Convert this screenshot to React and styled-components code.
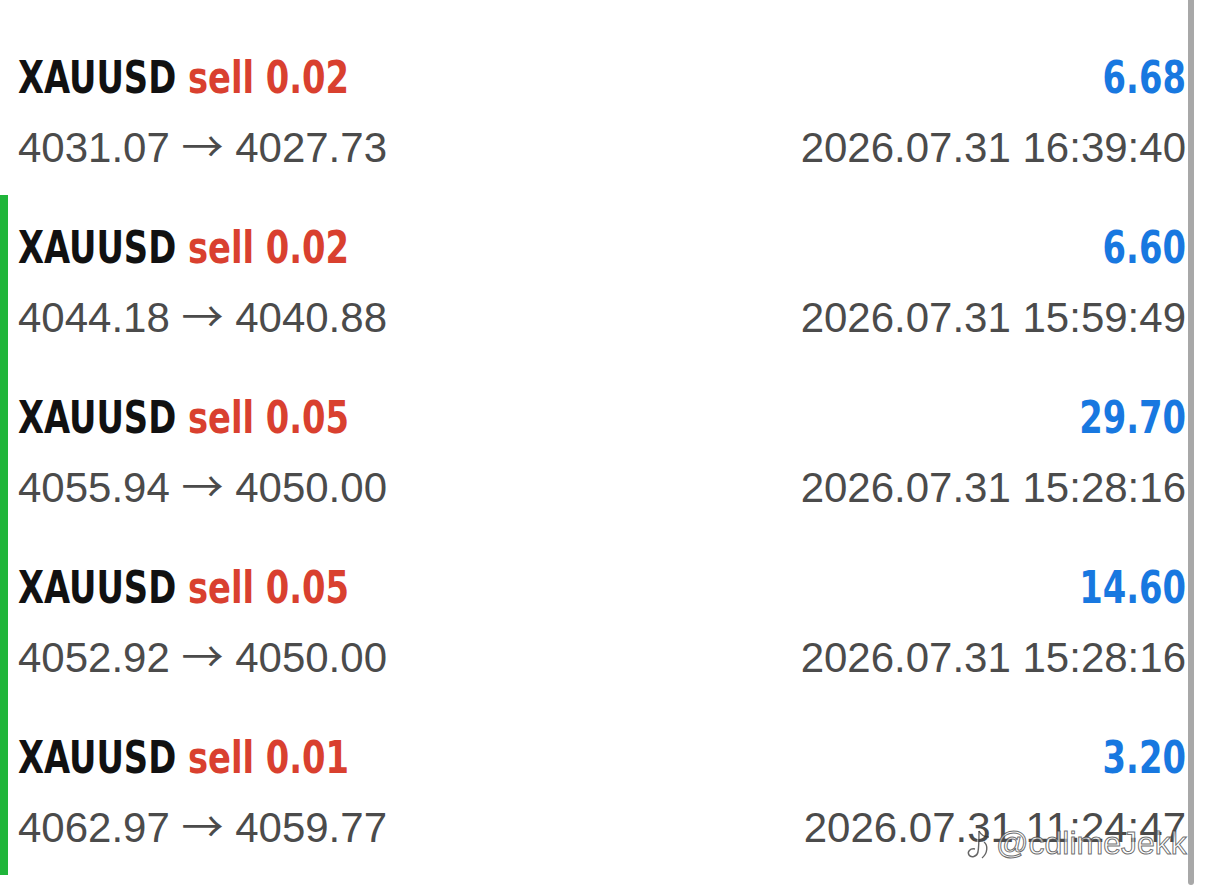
import React from "react";
import styled, { createGlobalStyle } from "styled-components";

const GlobalStyle = createGlobalStyle`
  html, body {
    margin: 0;
    padding: 0;
    background: #ffffff;
  }
  body {
    font-family: "Liberation Sans", Arial, sans-serif;
    overflow: hidden;
  }
`;

const Screen = styled.div`
  position: relative;
  width: 1206px;
  height: 894px;
  overflow: hidden;
  background: #ffffff;
`;

const List = styled.div`
  display: flex;
  flex-direction: column;
  padding-top: 25px;
`;

const Row = styled.div`
  display: flex;
  flex-direction: column;
  gap: 20px;
  height: 170px;
  box-sizing: border-box;
  padding: 28px 20px 22px 18px;
  box-shadow: ${(p) => (p.$marked ? "inset 8px 0 0 #20b53a" : "none")};
`;

const Line = styled.div`
  display: flex;
  justify-content: space-between;
  align-items: baseline;
  height: 50px;
  line-height: 50px;
  white-space: nowrap;
`;

/* tall, narrow bold face: condensed DejaVu squeezed a bit further */
const Condensed = styled.span`
  display: inline-block;
  font-family: "DejaVu Sans Condensed", "DejaVu Sans", sans-serif;
  font-stretch: condensed;
  font-weight: bold;
  font-size: 45px;
  transform: scaleX(0.834);
`;

const Title = styled(Condensed)`
  transform-origin: left center;
  color: #111111;
`;

const Side = styled.span`
  color: #d9402f;
  margin-left: 14px;
`;

const Profit = styled(Condensed)`
  transform-origin: right center;
  color: #1878e0;
`;

const Detail = styled.span`
  font-family: "Liberation Sans", Arial, sans-serif;
  font-size: 42px;
  color: #4b4b4b;
`;

const Arrow = styled.span`
  font-family: "Noto Sans CJK SC", "DejaVu Sans", sans-serif;
  font-size: 42px;
  line-height: 0;
`;

const ScrollThumb = styled.div`
  position: absolute;
  top: -10px;
  left: 1188px;
  width: 6px;
  height: 895px;
  border-radius: 3px;
  background: #a8a8a8;
`;

const Watermark = styled.div`
  position: absolute;
  left: 966px;
  top: 825px;
  display: flex;
  align-items: center;
  gap: 4px;
  font-family: "Liberation Sans", Arial, sans-serif;
  font-size: 32px;
  color: rgba(255, 255, 255, 0.6);
  -webkit-text-stroke: 1px rgba(60, 60, 60, 0.75);
  pointer-events: none;
`;

const trades = [
  { lot: "0.02", open: "4031.07", close: "4027.73", profit: "6.68", time: "2026.07.31 16:39:40", marked: false },
  { lot: "0.02", open: "4044.18", close: "4040.88", profit: "6.60", time: "2026.07.31 15:59:49", marked: true },
  { lot: "0.05", open: "4055.94", close: "4050.00", profit: "29.70", time: "2026.07.31 15:28:16", marked: true },
  { lot: "0.05", open: "4052.92", close: "4050.00", profit: "14.60", time: "2026.07.31 15:28:16", marked: true },
  { lot: "0.01", open: "4062.97", close: "4059.77", profit: "3.20", time: "2026.07.31 11:24:47", marked: true },
];

function NoteLogo() {
  const stroke = "rgba(50,50,50,0.75)";
  return (
    <svg width="26" height="32" viewBox="0 0 26 32" fill="none">
      <path
        d="M13 3 C13 10 13 18 12 24 C11 29 5 30 3 27 C1 24 4 20 9 21"
        stroke={stroke}
        strokeWidth="1.4"
        fill="rgba(255,255,255,0.5)"
      />
      <path d="M13 3 C15 7 19 9 23 9" stroke={stroke} strokeWidth="1.4" />
      <path d="M18 14 C22 17 22 25 16 30" stroke={stroke} strokeWidth="1.4" />
    </svg>
  );
}

export default function App() {
  return (
    <Screen>
      <GlobalStyle />
      <List>
        {trades.map((t, i) => (
          <Row key={i} $marked={t.marked}>
            <Line>
              <Title>
                XAUUSD<Side>sell {t.lot}</Side>
              </Title>
              <Profit>{t.profit}</Profit>
            </Line>
            <Line>
              <Detail>
                {t.open} <Arrow>→</Arrow> {t.close}
              </Detail>
              <Detail>{t.time}</Detail>
            </Line>
          </Row>
        ))}
      </List>
      <ScrollThumb />
      <Watermark>
        <NoteLogo />
        <span>@cdlimeJekk</span>
      </Watermark>
    </Screen>
  );
}
